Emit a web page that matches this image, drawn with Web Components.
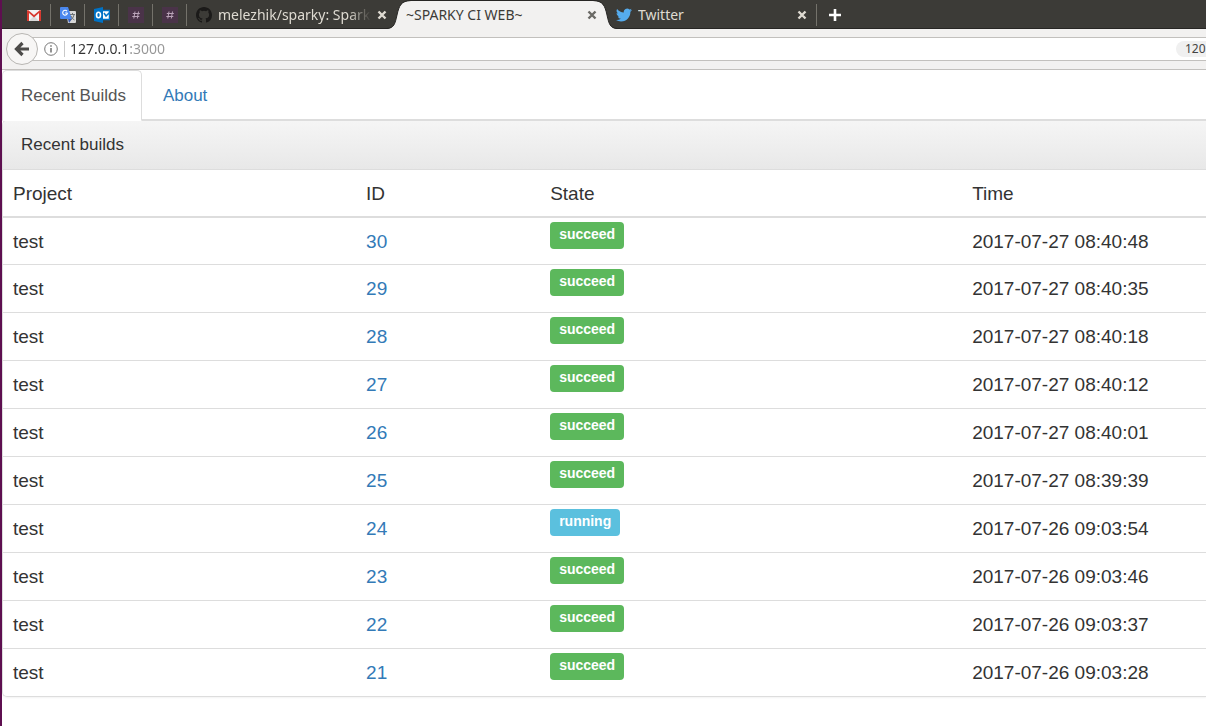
<!DOCTYPE html>
<html lang="en">
<head>
<meta charset="utf-8">
<title>~SPARKY CI WEB~</title>
<style>
html, body { margin: 0; min-height: 100%; background: #fff; }
body { min-height: 100vh; display: flex; overflow-x: hidden; }
</style>
</head>
<body>
<sparky-window></sparky-window>
<script>
const define = (name, html, setup) => {
  const template = document.createElement('template');
  template.innerHTML = html;
  customElements.define(name, class extends HTMLElement {
    connectedCallback() {
      if (this.shadowRoot) return;
      const root = this.attachShadow({ mode: 'open' });
      root.append(template.content.cloneNode(true));
      if (setup) setup(this, root);
    }
  });
};

const icons = {
  gmail: '<path fill="#f3f3f3" d="M1 3h14v11H1z"/><path fill="#d9d9d9" d="M3 14l5-5 5 5z"/><path fill="#d8392f" d="M1 14V4q0-1 1-1l6 5 6-5q1 0 1 1v10h-2V6L8 10.500 3 6v8z"/>',
  translate: '<path fill="#d8d8d8" d="M6 4h9q1 0 1 1v10q0 1-1 1H8z"/><path fill="#4a87ee" d="M1 0h7l4 12H1q-1 0-1-1V1q0-1 1-1z"/><path fill="#3559b5" d="M8 12h4l-3 4z"/><path d="M7.500 6H5.200M7 4.200A2.400 2.400 0 1 0 7.500 6" fill="none" stroke="#fff" stroke-width="1.100"/><path d="M10 7.500h5M12.500 6v1.500M14 8q-1 4-3.500 5M11 9q1 3 3.500 4" fill="none" stroke="#6f7477"/>',
  outlook: '<path fill="#0072c6" d="M0 2l9-2v16l-9-2z"/><path fill="#fff" d="M9 4h7v8H9z"/><path d="M9 3.500h6.500v9H9M10 6l2 3 4-4" fill="none" stroke="#0072c6" stroke-width="1.500"/><ellipse cx="4.500" cy="8" rx="2" ry="2.700" fill="none" stroke="#fff" stroke-width="1.600"/>',
  hash: '<path fill="#4a3349" d="M0 0h16v16H0z"/><path d="M7 4.500L5.800 11.500M10.500 4.500L9.300 11.500M4.800 6.500h7M4.300 9.500h7" stroke="#b9a3b8" fill="none"/>',
  github: '<path fill="#1b1a19" fill-rule="evenodd" d="M8 0C3.580 0 0 3.580 0 8c0 3.540 2.290 6.530 5.470 7.590.4.070.55-.17.55-.38v-1.490c-2.010.37-2.530-.49-2.690-.94-.09-.23-.48-.94-.82-1.130-.28-.15-.68-.52-.01-.53.63-.01 1.080.58 1.230.82.72 1.210 1.870.87 2.330.66.07-.52.28-.87.510-1.070-1.780-.2-3.640-.89-3.640-3.950 0-.87.310-1.590.820-2.150-.08-.2-.36-1.020.08-2.120 0 0 .67-.21 2.200.82a7.600 7.600 0 0 1 4 0c1.530-1.040 2.200-.82 2.200-.82.440 1.100.160 1.920.080 2.120.510.560.820 1.270.820 2.150 0 3.070-1.870 3.750-3.650 3.950.290.250.540.730.540 1.480v2.200c0 .210.150.460.550.380A8 8 0 0 0 16 8c0-4.420-3.580-8-8-8z"/>',
  twitter: '<path fill="#55acee" d="M15.970 3.060c-.59.260-1.220.440-1.880.520.680-.410 1.190-1.050 1.440-1.820-.63.380-1.340.650-2.080.8a3.280 3.280 0 0 0-5.590 2.990A9.300 9.300 0 0 1 1.110 2.120a3.280 3.280 0 0 0 1.010 4.380c-.54-.02-1.040-.17-1.480-.41v.040c0 1.590 1.130 2.910 2.630 3.220-.48.130-.99.150-1.480.060a3.280 3.280 0 0 0 3.060 2.280A6.580 6.580 0 0 1 0 13.050a9.290 9.290 0 0 0 5.030 1.470c6.040 0 9.340-5 9.340-9.330v-.42c.64-.47 1.200-1.050 1.600-1.710z"/>'
};

define('app-icon', `<style>:host{display:block;width:16px;height:16px;flex:none}svg{display:block}</style>
<svg width="16" height="16" viewBox="0 0 16 16" aria-hidden="true"></svg>`,
(host, root) => { root.querySelector('svg').innerHTML = icons[host.getAttribute('name')]; });

define('pinned-tab', `<style>
:host{display:block;width:34px;flex:none}
button{all:unset;box-sizing:border-box;width:34px;height:22px;display:flex;align-items:center;justify-content:center;border-right:1px solid #74726b;cursor:pointer}
</style><button type="button"><slot></slot></button>`,
(host, root) => { root.querySelector('button').setAttribute('aria-label', host.getAttribute('label')); });

define('browser-tab', `<style>
:host{display:flex;align-items:center;position:relative;box-sizing:border-box;width:210px;height:29px;padding:1px 9px 0;color:#dfdbd2;flex:none;--x:#dfdbd2}
:host([active]){color:#3c3b37;--x:#6a6965;z-index:1}
.shape{display:none;position:absolute;left:-10px;top:0}
:host([active]) .shape{display:block}
button{all:unset;cursor:pointer}
.title{position:relative;display:flex;align-items:center;gap:6px;flex:1;min-width:0}
.text{flex:1;overflow:hidden;white-space:nowrap;font:14px/20px "Noto Sans",sans-serif}
:host([fade]) .text{-webkit-mask-image:linear-gradient(90deg,#000 85%,transparent)}
.close{position:relative;width:12px;height:12px;flex:none;margin-left:5px}
.close svg{display:block}
</style>
<svg class="shape" width="230" height="29" viewBox="0 0 230 29" aria-hidden="true"><path fill="#f2f1f0" d="M0 29C7 28 8 24 10 15C12 6 14 1 24 1H206C216 1 218 6 220 15C222 24 223 28 230 29z"/><path fill="none" stroke="#272624" d="M0 28.500C7 28 8 24 10 15C12 6 14 .500 24 .500H206C216 .500 218 6 220 15C222 24 223 28 230 28.500"/></svg>
<button class="title" type="button"><slot name="icon"></slot><span class="text"><slot></slot></span></button>
<button class="close" type="button" aria-label="Close tab"><svg width="12" height="12" viewBox="0 0 12 12"><path d="M2.500 2.500l7 7M9.500 2.500l-7 7" fill="none" stroke="var(--x)" stroke-width="2.400"/></svg></button>`);

define('tab-strip', `<style>
:host{display:flex;align-items:flex-start;height:28px;padding-left:15px;background:#3c3b37;border-bottom:1px solid #272624}
.new{all:unset;width:36px;height:30px;display:flex;align-items:center;justify-content:center;cursor:pointer}
.rule{width:1px;height:22px;background:#74726b;margin:4px 0 0 -1px}
pinned-tab{margin-top:4px}
</style>
<pinned-tab label="Gmail"><app-icon name="gmail"></app-icon></pinned-tab>
<pinned-tab label="Translate"><app-icon name="translate"></app-icon></pinned-tab>
<pinned-tab label="Outlook"><app-icon name="outlook"></app-icon></pinned-tab>
<pinned-tab label="Channel one"><app-icon name="hash"></app-icon></pinned-tab>
<pinned-tab label="Channel two"><app-icon name="hash"></app-icon></pinned-tab>
<browser-tab fade><app-icon slot="icon" name="github"></app-icon>melezhik/sparky: Sparky</browser-tab>
<browser-tab active>~SPARKY CI WEB~</browser-tab>
<browser-tab><app-icon slot="icon" name="twitter"></app-icon>Twitter</browser-tab>
<span class="rule"></span>
<button class="new" type="button" aria-label="New tab"><svg width="14" height="14" viewBox="0 0 14 14"><path d="M7 1v12M1 7h12" stroke="#fff" stroke-width="2.600"/></svg></button>`);

define('address-bar', `<style>
:host{display:flex;align-items:center;height:40px;background:#f2f1f0;border-bottom:1px solid #c2c0bd}
.back{position:relative;z-index:1;box-sizing:border-box;width:32px;height:32px;margin-left:4px;padding:0;flex:none;border:1px solid #b8b6b3;border-radius:50%;background:#f7f6f5;display:flex;align-items:center;justify-content:center}
.field{flex:1;display:flex;align-items:center;box-sizing:border-box;height:24px;margin-left:-16px;padding-left:22px;background:#fff;border:solid #c2c0bd;border-width:1px 0}
.info{all:unset;display:block;width:14px;height:14px}
.info svg{display:block}
.rule{width:1px;height:16px;background:#c9c9c9;margin:0 5px 0 6px}
input{flex:1;min-width:0;border:0;padding:0;outline:0;height:20px;font:14px/20px "Noto Sans",sans-serif;color:#333;-webkit-text-fill-color:transparent;background:linear-gradient(90deg,#333 60px,#969696 60px);-webkit-background-clip:text;background-clip:text}
.zoom{border:0;padding:0 0 0 9px;width:30px;height:16px;border-radius:8px 0 0 8px;background:#f0f0f0;color:#444;font:12px/16px "Noto Sans",sans-serif;text-align:left}
</style>
<button class="back" type="button" aria-label="Back"><svg width="16" height="16" viewBox="0 0 16 16"><path d="M8.500 2L2.500 8l6 6M3 8h12" fill="none" stroke="#4c4b49" stroke-width="3.200"/></svg></button>
<div class="field"><button class="info" type="button" aria-label="Site information"><svg width="14" height="14" viewBox="0 0 14 14"><circle cx="7" cy="7" r="6.300" fill="none" stroke="#777"/><path d="M7 6v4.500M7 3.200v1.500" stroke="#666" stroke-width="1.400"/></svg></button><span class="rule"></span>
<input type="text" aria-label="Address" value="127.0.0.1:3000" spellcheck="false"><button class="zoom" type="button">120</button></div>`);

define('page-tabs', `<style>
:host{display:flex;height:49px;border-bottom:1px solid #ddd;font:17px/24px "Liberation Sans",sans-serif}
a{box-sizing:border-box;height:51px;padding:13px 15px 13px 18px;margin-right:2px;border:1px solid transparent;border-radius:5px 5px 0 0;color:#337ab7;text-decoration:none}
a[aria-current]{position:relative;color:#555;background:#fff;border-color:#ddd #ddd #fff}
</style><a href="#builds" aria-current="page">Recent Builds</a><a href="#about">About</a>`);

define('state-label', `<style>
:host{display:inline-block;box-sizing:border-box;height:27px;padding:0 9px;border-radius:4px;background:#5cb85c;color:#fff;font:bold 14px/24px "Liberation Sans",sans-serif;vertical-align:top}
:host([kind=running]){background:#5bc0de}
</style><slot></slot>`);

define('build-table', `<style>
:host{display:block;color:#333;font:19px/27px "Liberation Sans",sans-serif}
table{width:100%;table-layout:fixed;border-collapse:separate;border-spacing:0}
.project{width:29.350%}.id{width:15.300%}.state{width:35.080%}
th,td{box-sizing:border-box;text-align:left;font-weight:400;padding:0 10px;height:48px}
th{border-bottom:2px solid #ddd}
tr + tr td{border-top:1px solid #ddd}
tbody tr:first-child td{height:46px}
td.label{vertical-align:top;padding-top:4px}
a{color:#337ab7;text-decoration:none}
</style>
<table><colgroup><col class="project"><col class="id"><col class="state"><col></colgroup>
<thead><tr><th scope="col">Project</th><th scope="col">ID</th><th scope="col">State</th><th scope="col">Time</th></tr></thead><tbody></tbody></table>`,
(host, root) => {
  const builds = [
    [30, 'succeed', '2017-07-27 08:40:48'], [29, 'succeed', '2017-07-27 08:40:35'],
    [28, 'succeed', '2017-07-27 08:40:18'], [27, 'succeed', '2017-07-27 08:40:12'],
    [26, 'succeed', '2017-07-27 08:40:01'], [25, 'succeed', '2017-07-27 08:39:39'],
    [24, 'running', '2017-07-26 09:03:54'], [23, 'succeed', '2017-07-26 09:03:46'],
    [22, 'succeed', '2017-07-26 09:03:37'], [21, 'succeed', '2017-07-26 09:03:28']
  ];
  root.querySelector('tbody').innerHTML = builds.map(([id, state, time]) =>
    `<tr><td>test</td><td><a href="#build-${id}">${id}</a></td><td class="label"><state-label kind="${state}">${state}</state-label></td><td>${time}</td></tr>`).join('');
});

define('build-panel', `<style>
:host{display:block;border:solid #ddd;border-width:1px 0 1px 1px;border-radius:5px 0 0 5px;box-shadow:0 1px 2px rgba(0,0,0,.05);overflow:hidden}
h1{margin:0;padding:12px 18px;font:17px/24px "Liberation Sans",sans-serif;color:#333;background:linear-gradient(#f5f5f5,#e8e8e8);border-bottom:1px solid #ddd}
</style><h1><slot name="heading"></slot></h1><slot></slot>`);

define('sparky-window', `<style>
:host{display:block;flex:1;min-width:0;border-left:2px solid #5e0f50}
</style>
<tab-strip></tab-strip><address-bar></address-bar>
<main><page-tabs></page-tabs><build-panel><span slot="heading">Recent builds</span><build-table></build-table></build-panel></main>`);
</script>
</body>
</html>
